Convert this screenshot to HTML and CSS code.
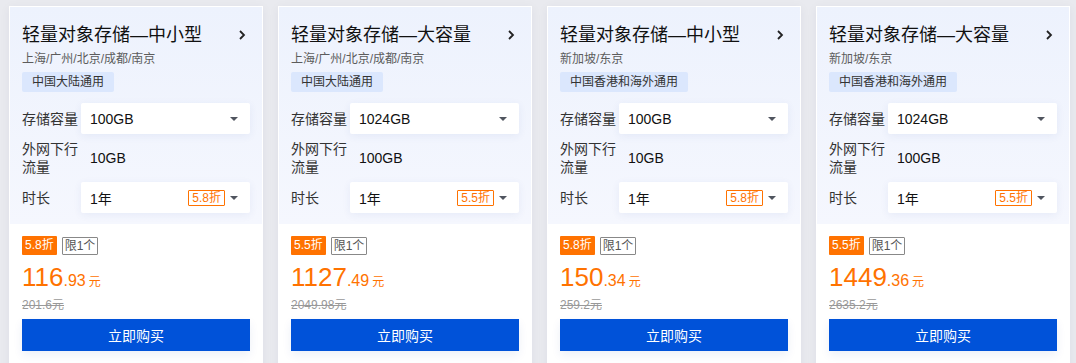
FILE: index.html
```html
<!DOCTYPE html>
<html lang="zh-CN">
<head>
    <meta charset="UTF-8">
    <title>轻量对象存储</title>
    <link rel="stylesheet" href="styles.css">
</head>
<body>

<div class="product-list">
    <!-- 卡片 1 -->
    <div class="product-card">
        <div class="card-top">
            <div class="card-title">
                <span>轻量对象存储—中小型</span>
                <svg class="chevron" width="8" height="12" viewBox="0 0 8 12"><polyline points="2,2 6,6 2,10" fill="none" stroke="#222" stroke-width="1.8"/></svg>
            </div>
            <div class="card-region">上海/广州/北京/成都/南京</div>
            <div class="card-tag">中国大陆通用</div>
            <div class="spec-row">
                <span class="spec-label">存储容量</span>
                <div class="spec-select"><span class="select-value">100GB</span><span class="caret"></span></div>
            </div>
            <div class="spec-row">
                <span class="spec-label">外网下行<br>流量</span>
                <span class="spec-text">10GB</span>
            </div>
            <div class="spec-row">
                <span class="spec-label">时长</span>
                <div class="spec-select"><span class="select-value">1年</span><span class="select-badge">5.8折</span><span class="caret"></span></div>
            </div>
        </div>
        <div class="card-bottom">
            <div class="badges"><span class="badge-off">5.8折</span><span class="badge-limit">限1个</span></div>
            <div class="price"><span class="price-int">116</span><span class="price-dec">.93</span><span class="price-unit">元</span></div>
            <div class="price-old">201.6元</div>
            <button class="buy-btn">立即购买</button>
        </div>
    </div>

    <!-- 卡片 2 -->
    <div class="product-card">
        <div class="card-top">
            <div class="card-title">
                <span>轻量对象存储—大容量</span>
                <svg class="chevron" width="8" height="12" viewBox="0 0 8 12"><polyline points="2,2 6,6 2,10" fill="none" stroke="#222" stroke-width="1.8"/></svg>
            </div>
            <div class="card-region">上海/广州/北京/成都/南京</div>
            <div class="card-tag">中国大陆通用</div>
            <div class="spec-row">
                <span class="spec-label">存储容量</span>
                <div class="spec-select"><span class="select-value">1024GB</span><span class="caret"></span></div>
            </div>
            <div class="spec-row">
                <span class="spec-label">外网下行<br>流量</span>
                <span class="spec-text">100GB</span>
            </div>
            <div class="spec-row">
                <span class="spec-label">时长</span>
                <div class="spec-select"><span class="select-value">1年</span><span class="select-badge">5.5折</span><span class="caret"></span></div>
            </div>
        </div>
        <div class="card-bottom">
            <div class="badges"><span class="badge-off">5.5折</span><span class="badge-limit">限1个</span></div>
            <div class="price"><span class="price-int">1127</span><span class="price-dec">.49</span><span class="price-unit">元</span></div>
            <div class="price-old">2049.98元</div>
            <button class="buy-btn">立即购买</button>
        </div>
    </div>

    <!-- 卡片 3 -->
    <div class="product-card">
        <div class="card-top">
            <div class="card-title">
                <span>轻量对象存储—中小型</span>
                <svg class="chevron" width="8" height="12" viewBox="0 0 8 12"><polyline points="2,2 6,6 2,10" fill="none" stroke="#222" stroke-width="1.8"/></svg>
            </div>
            <div class="card-region">新加坡/东京</div>
            <div class="card-tag">中国香港和海外通用</div>
            <div class="spec-row">
                <span class="spec-label">存储容量</span>
                <div class="spec-select"><span class="select-value">100GB</span><span class="caret"></span></div>
            </div>
            <div class="spec-row">
                <span class="spec-label">外网下行<br>流量</span>
                <span class="spec-text">10GB</span>
            </div>
            <div class="spec-row">
                <span class="spec-label">时长</span>
                <div class="spec-select"><span class="select-value">1年</span><span class="select-badge">5.8折</span><span class="caret"></span></div>
            </div>
        </div>
        <div class="card-bottom">
            <div class="badges"><span class="badge-off">5.8折</span><span class="badge-limit">限1个</span></div>
            <div class="price"><span class="price-int">150</span><span class="price-dec">.34</span><span class="price-unit">元</span></div>
            <div class="price-old">259.2元</div>
            <button class="buy-btn">立即购买</button>
        </div>
    </div>

    <!-- 卡片 4 -->
    <div class="product-card">
        <div class="card-top">
            <div class="card-title">
                <span>轻量对象存储—大容量</span>
                <svg class="chevron" width="8" height="12" viewBox="0 0 8 12"><polyline points="2,2 6,6 2,10" fill="none" stroke="#222" stroke-width="1.8"/></svg>
            </div>
            <div class="card-region">新加坡/东京</div>
            <div class="card-tag">中国香港和海外通用</div>
            <div class="spec-row">
                <span class="spec-label">存储容量</span>
                <div class="spec-select"><span class="select-value">1024GB</span><span class="caret"></span></div>
            </div>
            <div class="spec-row">
                <span class="spec-label">外网下行<br>流量</span>
                <span class="spec-text">100GB</span>
            </div>
            <div class="spec-row">
                <span class="spec-label">时长</span>
                <div class="spec-select"><span class="select-value">1年</span><span class="select-badge">5.5折</span><span class="caret"></span></div>
            </div>
        </div>
        <div class="card-bottom">
            <div class="badges"><span class="badge-off">5.5折</span><span class="badge-limit">限1个</span></div>
            <div class="price"><span class="price-int">1449</span><span class="price-dec">.36</span><span class="price-unit">元</span></div>
            <div class="price-old">2635.2元</div>
            <button class="buy-btn">立即购买</button>
        </div>
    </div>
</div>

</body>
</html>
```

FILE: styles.css
```css
body {
    margin: 0;
    padding: 6px 6px 0 9px;
    background-color: #e9eaef;
    font-family: "Liberation Sans", "Noto Sans CJK SC", sans-serif;
    color: #333;
    overflow: hidden;
}
.product-list {
    display: flex;
    gap: 15px;
}
.product-card {
    width: 254px;
    box-sizing: border-box;
    border: 1px solid #fff;
    background-color: #fff;
    box-shadow: 0 2px 10px rgba(30, 40, 80, 0.06);
}
.card-top {
    padding: 15px 12px 11px 12px;
    background: linear-gradient(180deg, #edf2fd 0%, #f5f7fe 100%);
}
.card-title {
    display: flex;
    justify-content: space-between;
    align-items: center;
    font-size: 18px;
    line-height: 26px;
    color: #111;
}
.chevron {
    margin-right: 4px;
}
.card-region {
    margin-top: 2px;
    font-size: 12px;
    line-height: 18px;
    color: #5c5c5c;
}
.card-tag {
    display: table;
    margin-top: 4px;
    padding: 0 10px;
    font-size: 12px;
    line-height: 20px;
    color: #333;
    background-color: #dbe7fd;
    border-radius: 2px;
}
.spec-row {
    display: flex;
    align-items: center;
    margin-top: 6px;
}
.card-tag + .spec-row {
    margin-top: 11px;
}
.spec-label {
    width: 59px;
    flex-shrink: 0;
    font-size: 14px;
    line-height: 18px;
    color: #333;
}
.spec-select {
    flex: 1;
    display: flex;
    align-items: center;
    height: 31px;
    padding: 0 12px 0 9px;
    background-color: #fff;
    border-radius: 2px;
    box-shadow: 0 2px 8px rgba(40, 70, 160, 0.07);
    font-size: 14px;
    color: #111;
}
.select-value {
    flex: 1;
}
.select-badge {
    font-size: 12px;
    line-height: 14px;
    padding: 0 3px;
    border: 1px solid #ff7200;
    color: #ff7200;
    border-radius: 1px;
    margin-right: 5px;
}
.caret {
    width: 0;
    height: 0;
    border-left: 4px solid transparent;
    border-right: 4px solid transparent;
    border-top: 4px solid #50555f;
}
.spec-text {
    padding-left: 9px;
    font-size: 14px;
    color: #111;
}
.card-bottom {
    padding: 12px 12px 20px 12px;
    background-color: #fff;
}
.badges {
    display: flex;
    align-items: center;
    gap: 5px;
}
.badge-off {
    font-size: 12px;
    line-height: 19px;
    padding: 0 3px;
    background-color: #ff7200;
    color: #fff;
    border-radius: 1px;
}
.badge-limit {
    font-size: 12px;
    line-height: 16px;
    padding: 0 2px;
    border: 1px solid #888;
    color: #555;
    border-radius: 1px;
}
.price {
    margin-top: 8px;
    color: #ff7200;
    line-height: 29px;
}
.price-int {
    font-size: 26px;
}
.price-dec {
    font-size: 16px;
}
.price-unit {
    font-size: 12px;
    margin-left: 3px;
}
.price-old {
    font-size: 12px;
    line-height: 16px;
    color: #999;
    text-decoration: line-through;
}
.buy-btn {
    display: block;
    width: 100%;
    height: 32px;
    margin-top: 6px;
    border: none;
    border-radius: 0;
    background-color: #0052d9;
    color: #fff;
    font-family: inherit;
    font-size: 14px;
    cursor: pointer;
    box-shadow: 0 4px 10px rgba(0, 60, 160, 0.08);
}
```
